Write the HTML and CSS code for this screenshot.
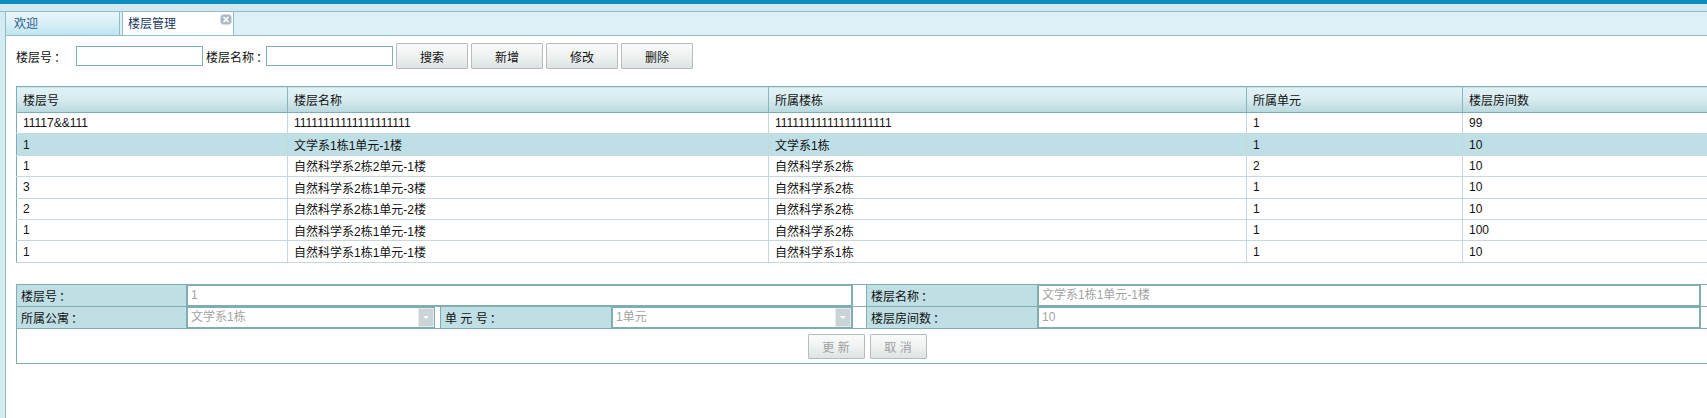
FILE: index.html
```html
<!DOCTYPE html>
<html lang="zh-CN">
<head>
<meta charset="utf-8">
<title>楼层管理</title>
<link rel="stylesheet" href="styles.css">
</head>
<body>
<div class="accent"></div>
<div class="band"></div>
<div class="workspace">
  <div class="side"></div>
  <div class="panel">
    <div class="tabs">
      <div class="tab tab-idle">欢迎</div>
      <div class="tab tab-active">楼层管理
        <span class="tab-close"><svg width="12" height="11" viewBox="0 0 12 11"><rect x="0.5" y="0.5" width="11" height="10" rx="3" fill="#a9b8c0" stroke="#d2dde2"/><path d="M3.5 2.8 L8.5 8.2 M8.5 2.8 L3.5 8.2" stroke="#ffffff" stroke-width="1.6"/></svg></span>
      </div>
    </div>
    <div class="content">
      <div class="search">
        <label class="search-label">楼层号<span class="colon">：</span></label>
        <input class="search-input" type="text">
        <label class="search-label">楼层名称<span class="colon">：</span></label>
        <input class="search-input" type="text">
        <button class="btn">搜索</button>
        <button class="btn">新增</button>
        <button class="btn">修改</button>
        <button class="btn">删除</button>
      </div>

      <table class="grid">
        <colgroup>
          <col class="c1"><col class="c2"><col class="c3"><col class="c4"><col class="c5">
        </colgroup>
        <thead>
          <tr><th>楼层号</th><th>楼层名称</th><th>所属楼栋</th><th>所属单元</th><th>楼层房间数</th></tr>
        </thead>
        <tbody>
          <tr><td>11117&amp;&amp;111</td><td>11111111111111111111</td><td>11111111111111111111</td><td>1</td><td>99</td></tr>
          <tr class="selected"><td>1</td><td>文学系1栋1单元-1楼</td><td>文学系1栋</td><td>1</td><td>10</td></tr>
          <tr><td>1</td><td>自然科学系2栋2单元-1楼</td><td>自然科学系2栋</td><td>2</td><td>10</td></tr>
          <tr><td>3</td><td>自然科学系2栋1单元-3楼</td><td>自然科学系2栋</td><td>1</td><td>10</td></tr>
          <tr><td>2</td><td>自然科学系2栋1单元-2楼</td><td>自然科学系2栋</td><td>1</td><td>10</td></tr>
          <tr><td>1</td><td>自然科学系2栋1单元-1楼</td><td>自然科学系2栋</td><td>1</td><td>100</td></tr>
          <tr><td>1</td><td>自然科学系1栋1单元-1楼</td><td>自然科学系1栋</td><td>1</td><td>10</td></tr>
        </tbody>
      </table>

      <div class="form-box">
        <div class="form-grid">
          <div class="f-label">楼层号<span class="colon">：</span></div>
          <div class="f-cell span-3"><div class="f-input">1</div></div>
          <div class="f-cell"></div>
          <div class="f-label">楼层名称<span class="colon">：</span></div>
          <div class="f-cell"><div class="f-input">文学系1栋1单元-1楼</div></div>
          <div class="f-cell"></div>

          <div class="f-label">所属公寓<span class="colon">：</span></div>
          <div class="f-cell"><div class="f-select narrow">文学系1栋<span class="arrow"></span></div></div>
          <div class="f-label">单 元 号<span class="colon">：</span></div>
          <div class="f-cell"><div class="f-select">1单元<span class="arrow"></span></div></div>
          <div class="f-cell"></div>
          <div class="f-label">楼层房间数<span class="colon">：</span></div>
          <div class="f-cell"><div class="f-input">10</div></div>
          <div class="f-cell"></div>
        </div>
        <div class="form-actions">
          <button class="btn btn-small" disabled>更 新</button>
          <button class="btn btn-small" disabled>取 消</button>
        </div>
      </div>
    </div>
  </div>
</div>
</body>
</html>
```

FILE: styles.css
```css
* { box-sizing: border-box; }
html, body {
  margin: 0;
  padding: 0;
  width: 1707px;
  height: 418px;
  overflow: hidden;
  background: #ffffff;
  font-family: "Liberation Sans", "Noto Sans CJK SC", sans-serif;
  font-size: 12px;
  color: #111;
}
.accent { height: 4px; background: #0b8dbf; }
.band { height: 8px; background: #d2eaef; border-bottom: 1px solid #8fbcc8; }
.workspace { display: flex; height: 406px; }
.side { width: 6px; flex: none; background: #d3ebf1; border-right: 1px solid #8fbcc8; }
.panel { flex: 1; min-width: 0; overflow: hidden; }

.colon {
  font-family: "Noto Sans CJK TC", "Noto Sans CJK SC", sans-serif;
  margin-left: 2px;
}

.tabs {
  display: flex;
  gap: 2px;
  height: 24px;
  background: #ddf0f7;
  border-bottom: 1px solid #8fbcc8;
}
.tab {
  position: relative;
  height: 23px;
  line-height: 24px;
  font-size: 12px;
}
.tab-idle {
  width: 114px;
  padding-left: 8px;
  color: #2b5a8c;
  background: linear-gradient(#e9f6fa, #d6eef6 55%, #bfe4f0);
  border-right: 1px solid #8fbcc8;
}
.tab-active {
  width: 112px;
  padding-left: 5px;
  color: #17385e;
  background: #ffffff;
  border-left: 1px solid #8fbcc8;
  border-right: 1px solid #8fbcc8;
}
.tab-close {
  position: absolute;
  right: 1px;
  top: 2px;
  width: 12px;
  height: 11px;
  line-height: 0;
}

.content { padding: 7px 0 0 10px; }

.search { display: flex; align-items: center; height: 26px; }
.search-label { width: 60px; flex: none; white-space: nowrap; }
.search-input {
  width: 127px;
  height: 20px;
  border: 1px solid #7fb1b7;
  margin-right: 3px;
  padding: 0 3px;
  font: inherit;
}
.btn {
  width: 72px;
  height: 26px;
  margin-right: 3px;
  border: 1px solid #b4bcbd;
  border-radius: 1px;
  background: linear-gradient(#f9fbfa, #eef2f1 50%, #dde3e3);
  font-family: inherit;
  font-size: 12px;
  color: #111;
  padding: 0;
}

.grid {
  margin-top: 17px;
  width: 1702px;
  table-layout: fixed;
  border-collapse: collapse;
  border: 1px solid #7eaeb5;
}
.c1 { width: 271px; }
.c2 { width: 481px; }
.c3 { width: 478px; }
.c4 { width: 216px; }
.c5 { width: 256px; }
.grid th {
  height: 26px;
  padding: 0 0 0 6px;
  text-align: left;
  font-weight: normal;
  color: #111;
  background: linear-gradient(#e1f2f5, #d8ecf0 45%, #b8d9de);
  border-right: 1px solid #8bb4bb;
  border-bottom: 1px solid #7eaeb5;
}
.grid td {
  height: 21.4px;
  padding: 0 0 0 6px;
  border-right: 1px solid #c6d8dd;
  border-bottom: 1px solid #c6d8dd;
  white-space: nowrap;
  overflow: hidden;
}
.grid tr.selected td { background: #bedfe6; }

.form-box {
  margin-top: 21px;
  width: 1702px;
  border: 1px solid #7eaeb1;
}
.form-grid {
  display: grid;
  grid-template-columns: 170px 254px 171px 241px 14px 171px 663px 1fr;
  grid-auto-rows: 22px;
}
.form-grid > div {
  border-right: 1px solid #7eaeb1;
  border-bottom: 1px solid #7eaeb1;
}
.f-label {
  background: #bfdfe5;
  padding-left: 4px;
  line-height: 21px;
  white-space: nowrap;
}
.f-cell { background: #ffffff; }
.span-3 { grid-column: span 3; }
.f-input, .f-select {
  position: relative;
  height: 100%;
  border: 1px solid #7eaeb1;
  padding-left: 3px;
  line-height: 19px;
  color: #a3a3a3;
  background: #fff;
}
.f-select.narrow { width: 248px; }
.arrow {
  position: absolute;
  right: 0;
  top: 0;
  width: 16px;
  height: 19px;
  background: #cbd3d6;
  border: 1px solid #e5eaec;
}
.arrow::after {
  content: "";
  position: absolute;
  left: 4px;
  top: 7px;
  border-left: 3px solid transparent;
  border-right: 3px solid transparent;
  border-top: 3px solid #ffffff;
}
.form-actions {
  display: flex;
  justify-content: center;
  gap: 5px;
  padding: 5px 0 4px;
}
.btn-small {
  width: 57px;
  height: 25px;
  margin: 0;
  color: #a0a0a0;
}
```
